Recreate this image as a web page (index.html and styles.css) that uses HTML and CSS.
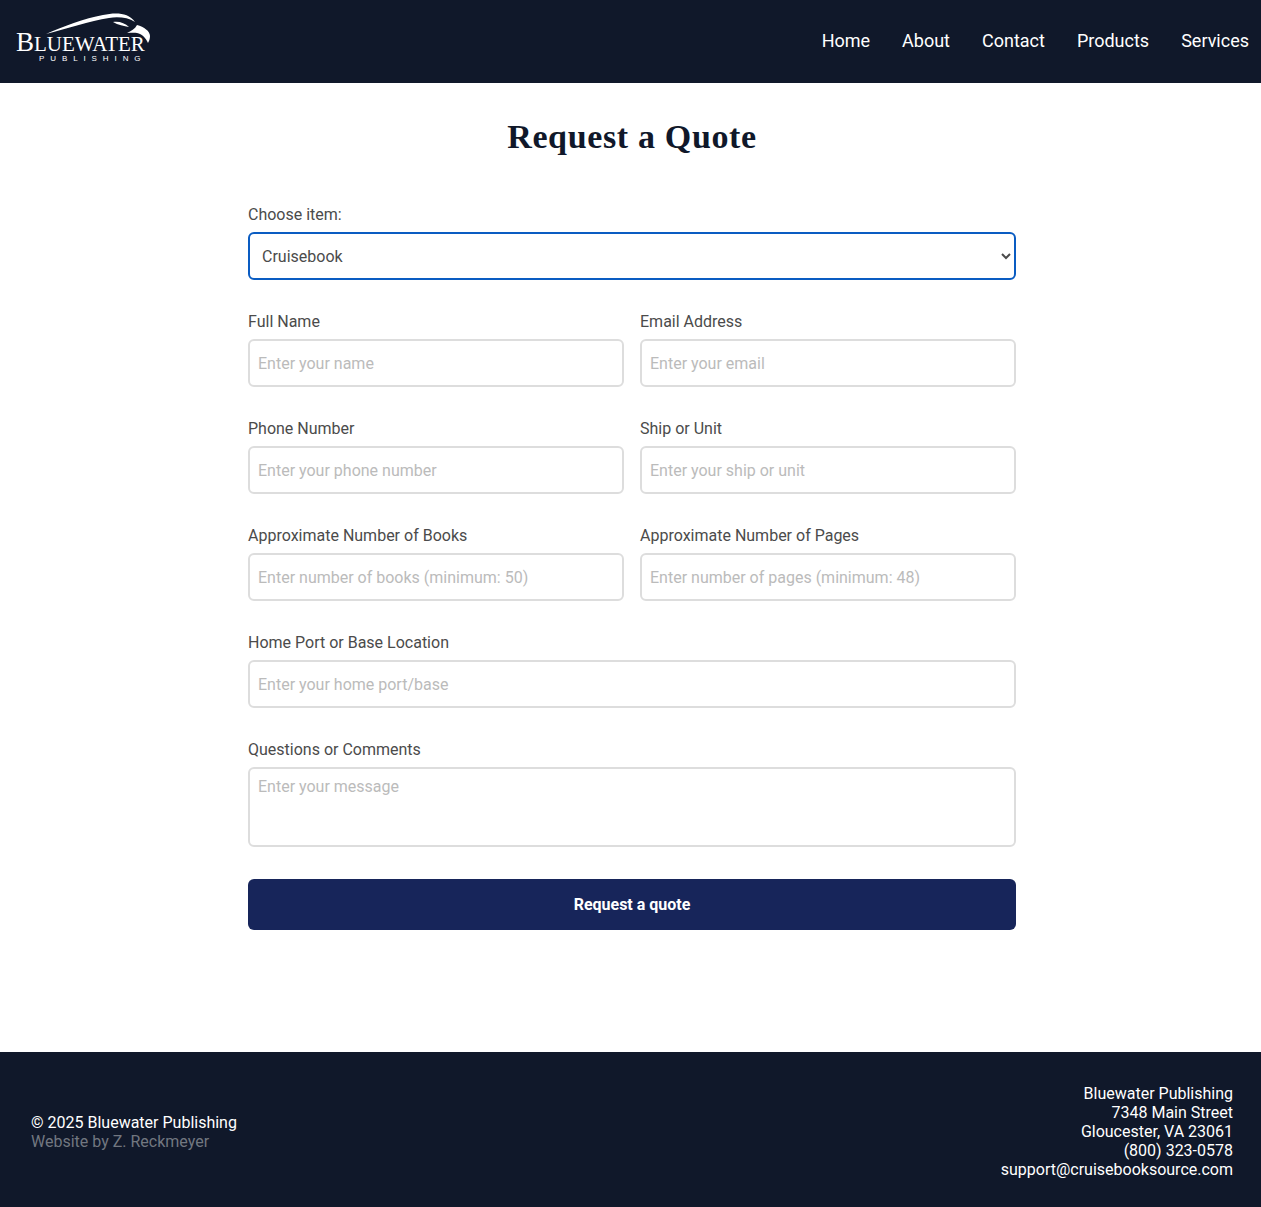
FILE: index.html
```html
<!DOCTYPE html>
<html lang="en">
<head>
    <meta charset="UTF-8">
    <meta name="viewport" content="width=device-width, initial-scale=1.0">
    <title>Request a Quote</title>
    <link rel="stylesheet" href="styles.css">
</head>
<body>

    <header class="site-header">
        <a href="#" class="logo">
            <svg class="logo-bird" width="106" height="36" viewBox="46 10 106 36" aria-hidden="true">
                <path d="M46 34 C62 27 85 18 103 15 C115 12.500 128 12 135 22 C128 17.500 118 16.500 109 18 C90 21 66 29 46 34 Z" fill="#fff"/>
                <path d="M113 22 C119 21 125 23 129 27 C124 26 118 25 113 22 Z" fill="#fff"/>
                <path d="M127 33 C131 31 135 29 137 25 C144 27 150 31 150 36 C150 39 149 41 148 43 C146 38 142 34 137 33 C134 32.500 130 33 127 33 Z" fill="#fff"/>
            </svg>
            <span class="logo-name"><span class="logo-big">B</span>LUEWATER</span>
            <span class="logo-sub">PUBLISHING</span>
        </a>
        <nav class="main-nav">
            <a href="#">Home</a>
            <a href="#">About</a>
            <a href="#">Contact</a>
            <a href="#">Products</a>
            <a href="#">Services</a>
        </nav>
    </header>

    <main class="quote">
        <h1>Request a Quote</h1>

        <form class="quote-form">
            <div class="field">
                <label for="item">Choose item:</label>
                <select id="item" class="select-active">
                    <option>Cruisebook</option>
                    <option>Yearbook</option>
                </select>
            </div>

            <div class="field-row">
                <div class="field">
                    <label for="name">Full Name</label>
                    <input type="text" id="name" placeholder="Enter your name">
                </div>
                <div class="field">
                    <label for="email">Email Address</label>
                    <input type="text" id="email" placeholder="Enter your email">
                </div>
            </div>

            <div class="field-row">
                <div class="field">
                    <label for="phone">Phone Number</label>
                    <input type="text" id="phone" placeholder="Enter your phone number">
                </div>
                <div class="field">
                    <label for="ship">Ship or Unit</label>
                    <input type="text" id="ship" placeholder="Enter your ship or unit">
                </div>
            </div>

            <div class="field-row">
                <div class="field">
                    <label for="books">Approximate Number of Books</label>
                    <input type="text" id="books" placeholder="Enter number of books (minimum: 50)">
                </div>
                <div class="field">
                    <label for="pages">Approximate Number of Pages</label>
                    <input type="text" id="pages" placeholder="Enter number of pages (minimum: 48)">
                </div>
            </div>

            <div class="field">
                <label for="port">Home Port or Base Location</label>
                <input type="text" id="port" placeholder="Enter your home port/base">
            </div>

            <div class="field">
                <label for="message">Questions or Comments</label>
                <textarea id="message" placeholder="Enter your message"></textarea>
            </div>

            <button type="button">Request a quote</button>
        </form>
    </main>

    <footer class="site-footer">
        <div class="credits">
            <p>© 2025 Bluewater Publishing</p>
            <p class="muted">Website by Z. Reckmeyer</p>
        </div>
        <address class="contact">
            <p>Bluewater Publishing</p>
            <p>7348 Main Street</p>
            <p>Gloucester, VA 23061</p>
            <p>(800) 323-0578</p>
            <p>support@cruisebooksource.com</p>
        </address>
    </footer>

</body>
</html>
```

FILE: styles.css
```css
* {
    box-sizing: border-box;
}

body {
    font-family: Roboto, sans-serif;
    font-size: 16px;
    margin: 0;
    background-color: #fff;
    color: #4b4b4b;
}

.site-header {
    height: 83px;
    background-color: #10182a;
    display: flex;
    justify-content: space-between;
    align-items: center;
    padding: 0 12px 0 0;
}

.logo {
    position: relative;
    display: block;
    width: 152px;
    height: 83px;
    color: #fff;
    text-decoration: none;
}

.logo-bird {
    position: absolute;
    left: 46px;
    top: 10px;
}

.logo-name {
    position: absolute;
    left: 16px;
    top: 30px;
    font-family: "Liberation Serif", serif;
    font-size: 21px;
    line-height: 24px;
    white-space: nowrap;
}

.logo-big {
    font-size: 27px;
}

.logo-sub {
    position: absolute;
    left: 39px;
    top: 54px;
    font-family: "Liberation Sans", sans-serif;
    font-size: 8px;
    line-height: 9px;
    letter-spacing: 5.9px;
    white-space: nowrap;
}

.main-nav {
    display: flex;
    gap: 32px;
    margin-top: -2px;
}

.main-nav a {
    color: #fff;
    font-size: 18px;
    line-height: 24px;
    text-decoration: none;
}

.quote {
    width: 768px;
    margin-left: 248px;
    height: 969px;
    padding-top: 32px;
}

h1 {
    font-family: "Liberation Serif", serif;
    font-size: 34px;
    line-height: 44px;
    letter-spacing: 0.65px;
    font-weight: bold;
    color: #10182a;
    text-align: center;
    margin: 0 0 46px;
}

.quote-form {
    display: flex;
    flex-direction: column;
    gap: 32px;
}

.field-row {
    display: grid;
    grid-template-columns: 1fr 1fr;
    gap: 16px;
}

.field {
    display: flex;
    flex-direction: column;
}

label {
    display: block;
    line-height: 19px;
    margin-bottom: 8px;
}

input,
select,
textarea {
    width: 100%;
    height: 48px;
    padding: 10px 8px;
    font-family: Roboto, sans-serif;
    font-size: 16px;
    color: #4b4b4b;
    background-color: #fff;
    border: 2px solid #ddd;
    border-radius: 6px;
    outline: none;
}

.select-active {
    border-color: #0a5cc2;
}

textarea {
    display: block;
    height: 80px;
    padding-top: 8px;
    resize: none;
}

::placeholder {
    color: #bbb;
    opacity: 1;
}

button {
    height: 51px;
    background-color: #17255a;
    color: #fff;
    font-family: Roboto, sans-serif;
    font-size: 16px;
    font-weight: bold;
    border: none;
    border-radius: 6px;
    cursor: pointer;
}

.site-footer {
    height: 155px;
    background-color: #10182a;
    color: #fff;
    display: flex;
    justify-content: space-between;
    align-items: center;
    padding: 4px 28px 0 31px;
    line-height: 19px;
}

.site-footer p {
    margin: 0;
}

.muted {
    color: #727780;
}

.contact {
    font-style: normal;
    text-align: right;
}
```
